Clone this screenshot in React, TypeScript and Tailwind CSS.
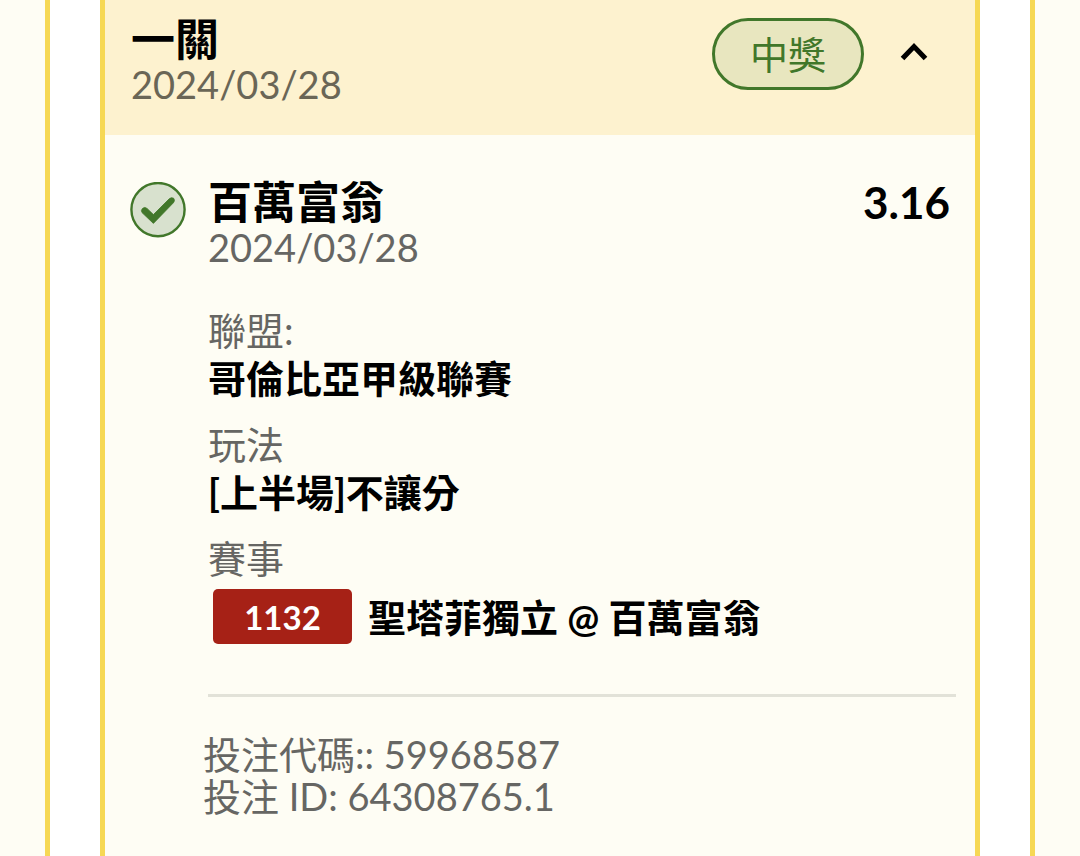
import { useState } from "react";

const leg = {
  pick: "百萬富翁",
  date: "2024/03/28",
  odds: "3.16",
  matchCode: "1132",
  match: "聖塔菲獨立 @ 百萬富翁",
  details: [
    { label: "聯盟:", value: "哥倫比亞甲級聯賽" },
    { label: "玩法", value: "[上半場]不讓分" },
  ],
};

function WonIcon() {
  return (
    <svg viewBox="0 0 56 56" className="h-14 w-14 shrink-0" role="img" aria-label="中獎">
      <circle cx="28" cy="27.6" r="26.6" fill="#d8e1ce" stroke="#41772a" strokeWidth="2.4" />
      <path
        d="M12.4 26.6Q14.6 24.4 17 26.4L23.4 32.6L39 17Q41.2 14.8 43.6 16.2Q45.4 18.4 43.4 20.8L23.4 41.4L12 30.6Q10.6 28.4 12.4 26.6Z"
        fill="#41772a"
        stroke="#41772a"
        strokeWidth="0.8"
        strokeLinejoin="round"
      />
    </svg>
  );
}

function BetLeg() {
  return (
    <div className="flex gap-[22px] pt-11 pr-[19px] pl-[25px]">
      <div className="pt-[3px]">
        <WonIcon />
      </div>
      <div className="min-w-0 flex-1">
        <div className="flex items-start justify-between">
          <div>
            <h3 className="text-[44px] leading-[46px] font-bold text-black">{leg.pick}</h3>
            <p className="leading-[44px]">{leg.date}</p>
          </div>
          <span className="pr-1.5 text-[44px] leading-[46px] font-bold text-black">{leg.odds}</span>
        </div>

        <dl className="mt-[37px] flex flex-col gap-[18px] leading-[48px]">
          {leg.details.map((row) => (
            <div key={row.label}>
              <dt>{row.label}</dt>
              <dd className="font-bold text-black">{row.value}</dd>
            </div>
          ))}
          <div>
            <dt>賽事</dt>
            <dd className="mt-[7px] flex items-center gap-4 pl-[5px] font-bold text-black">
              <span className="flex h-[55px] w-[139px] items-center justify-center rounded-[5px] bg-[#a62116] text-[33px] text-white">
                {leg.matchCode}
              </span>
              <span>{leg.match}</span>
            </dd>
          </div>
        </dl>

        <hr className="mt-[50px] border-t-[3px] border-[#e2e2d8]" />
      </div>
    </div>
  );
}

export default function App() {
  const [open, setOpen] = useState(true);

  return (
    <div
      lang="zh-Hant"
      className="flex min-h-screen bg-[#fefdf4] px-[45px] font-[Lato,'Noto_Sans_CJK_TC',sans-serif] text-[38px] text-[#666663]"
    >
      <main className="flex flex-1 border-x-[5px] border-[#f6d854] bg-white px-[50px]">
        <section className="flex-1 border-x-[5px] border-[#f6d854] bg-[#fefdf4]">
          <header className="flex items-start bg-[#fdf2cf] pt-4 pr-[43px] pb-[29px] pl-[26px]">
            <div className="flex-1">
              <h2 className="text-[44px] leading-[46px] font-bold text-black">一關</h2>
              <p className="leading-[44px] text-[#6a6656]">2024/03/28</p>
            </div>
            <span className="mt-0.5 flex h-[72px] w-[152px] items-center justify-center rounded-full border-[3px] border-[#41772a] bg-[#e8e6bf] text-[#41772a]">
              中獎
            </span>
            <button
              type="button"
              aria-label="展開或收合"
              aria-expanded={open}
              onClick={() => setOpen(!open)}
              className="ml-8 flex h-[72px] w-9 cursor-pointer items-center justify-center"
            >
              <svg viewBox="0 0 36 36" className={open ? "h-9 w-9" : "h-9 w-9 rotate-180"} fill="none" stroke="#000" strokeWidth="5">
                <path d="M6.5 24.5L18 12.5L29.5 24.5" />
              </svg>
            </button>
          </header>

          {open && (
            <>
              <BetLeg />
              <footer className="pt-9 pb-9 pl-[98px] leading-[42px]">
                <p>投注代碼:: 59968587</p>
                <p>投注 ID: 64308765.1</p>
              </footer>
            </>
          )}
        </section>
      </main>
    </div>
  );
}
